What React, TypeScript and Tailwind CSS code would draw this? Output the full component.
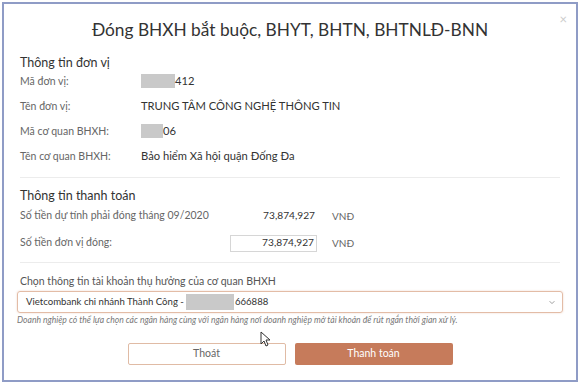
import React from 'react';

const Mask: React.FC<{ w: number }> = ({ w }) => (
  <span className="inline-block h-[14px] bg-[#c9c9c9] align-middle" style={{ width: w }} />
);

const InfoRow: React.FC<{ label: string; children: React.ReactNode }> = ({ label, children }) => (
  <div className="flex h-[25px] items-center">
    <span className="w-[121px] text-[10.5px] text-[#666]">{label}</span>
    <span className="flex items-center text-[11.2px] text-[#333]">{children}</span>
  </div>
);

export default function App() {
  return (
    <div className="h-[386px] w-[580px] bg-white p-[2px] font-['Lato',sans-serif]">
      <div className="relative flex h-[380px] w-[576px] flex-col border-2 border-[#8f9cc6] bg-white">
        <button className="absolute right-[9px] top-[9px] text-[13px] leading-none text-[#cccccc]">×</button>

        <h1 className="pt-[13px] text-center text-[17.3px] leading-[26px] text-[#333]">
          Đóng BHXH bắt buộc, BHYT, BHTN, BHTNLĐ-BNN
        </h1>

        <div className="px-[16px]">
          {/* Thông tin đơn vị */}
          <div className="mt-[12px] text-[12.5px] leading-[16px] text-[#333]">Thông tin đơn vị</div>
          <div className="-mt-[2px] flex flex-col">
            <InfoRow label="Mã đơn vị:">
              <Mask w={34} />
              <span>412</span>
            </InfoRow>
            <InfoRow label="Tên đơn vị:">TRUNG TÂM CÔNG NGHỆ THÔNG TIN</InfoRow>
            <InfoRow label="Mã cơ quan BHXH:">
              <Mask w={22} />
              <span>06</span>
            </InfoRow>
            <InfoRow label="Tên cơ quan BHXH:">Bảo hiểm Xã hội quận Đống Đa</InfoRow>
          </div>
          <div className="mt-[8px] border-t border-[#ececec]" />

          {/* Thông tin thanh toán */}
          <div className="mt-[10px] text-[12.5px] leading-[16px] text-[#333]">Thông tin thanh toán</div>
          <div className="flex h-[24px] items-center">
            <span className="w-[210px] text-[10.5px] text-[#666]">Số tiền dự tính phải đóng tháng 09/2020</span>
            <span className="w-[87px] pr-[2px] text-right text-[10.2px] text-[#333]">73,874,927</span>
            <span className="ml-[15px] text-[10px] text-[#666]">VNĐ</span>
          </div>
          <div className="flex h-[30px] items-center">
            <span className="w-[210px] text-[10.5px] text-[#666]">Số tiền đơn vị đóng:</span>
            <span className="flex h-[17px] w-[87px] items-center justify-end border border-[#d6d6d6] pr-[2px] text-[10.2px] text-[#333]">
              73,874,927
            </span>
            <span className="ml-[15px] text-[10px] text-[#666]">VNĐ</span>
          </div>
          <div className="mt-[4px] border-t border-[#ececec]" />

          {/* Tài khoản thụ hưởng */}
          <div className="mt-[10px] text-[10.5px] leading-[16px] text-[#555]">
            Chọn thông tin tài khoản thụ hưởng của cơ quan BHXH
          </div>
          <div className="-mx-[3px] mt-[2px] flex h-[22px] items-center justify-between rounded-[3px] border border-[#e3bca6] pl-[8px] pr-[6px] shadow-[0_0_2px_rgba(200,130,90,0.35)]">
            <span className="flex items-center text-[9.6px] text-[#333]">
              <span>Vietcombank chi nhánh Thành Công -</span>
              <span className="ml-[2px] inline-block h-[16px] w-[48px] bg-[#c9c9c9]" />
              <span className="ml-[1px]">666888</span>
            </span>
            <svg width="8" height="8" viewBox="0 0 10 10" className="text-[#999]">
              <path d="M2 4l3 3 3-3" fill="none" stroke="currentColor" strokeWidth="1.2" />
            </svg>
          </div>
          <div className="-mx-[3px] mt-[1px] text-[8.6px] italic leading-[12px] text-[#777]">
            Doanh nghiệp có thể lựa chọn các ngân hàng cùng với ngân hàng nơi doanh nghiệp mở tài khoản để rút ngắn thời gian xử lý.
          </div>

          <div className="mt-[17px] flex justify-center gap-[9px]">
            <button className="h-[22px] w-[158px] rounded-[2px] border border-[#e0bba5] bg-white text-[10.5px] text-[#666]">
              Thoát
            </button>
            <button className="h-[22px] w-[158px] rounded-[2px] bg-[#c67b5b] text-[10.5px] text-white">
              Thanh toán
            </button>
          </div>
        </div>

        {/* mouse cursor */}
        <svg width="11" height="16" viewBox="0 0 11 16" className="absolute left-[256px] top-[327px]">
          <path d="M1 1v12l3-3 2 5 2-1-2-5h4z" fill="white" stroke="#333" strokeWidth="1" strokeLinejoin="round" />
        </svg>
      </div>
    </div>
  );
}
